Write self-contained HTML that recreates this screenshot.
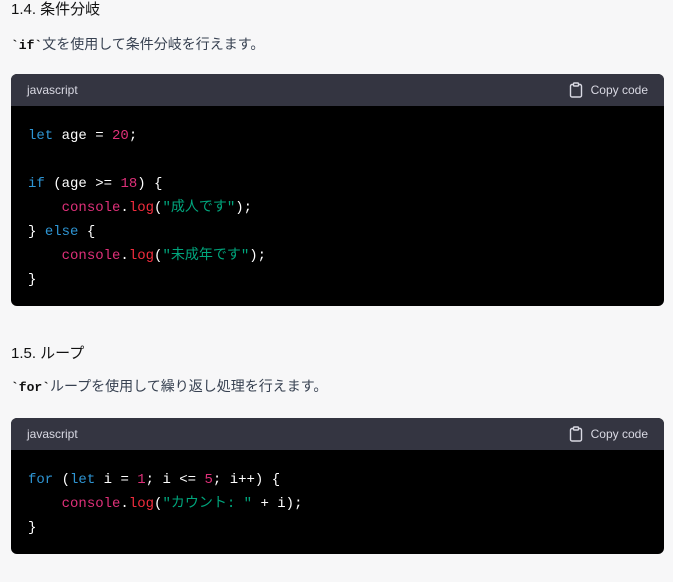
<!DOCTYPE html>
<html><head><meta charset="utf-8"><style>
body{margin:0;background:#f7f7f8;width:673px;height:582px;overflow:hidden;font-family:"Liberation Sans","Noto Sans CJK JP",sans-serif;color:#374151}
.h{position:absolute;left:11px;font-size:15px;color:#111}
.p{position:absolute;left:11px;font-size:14px;color:#374151}
.p code{font-family:"Liberation Mono",monospace;font-weight:bold;color:#111;font-size:13px}
.blk{position:absolute;left:11px;width:653px;background:#000;border-radius:6px;overflow:hidden}
.hd{height:32px;background:#343541;color:#d9d9e3;font-size:12px;display:flex;align-items:center;justify-content:space-between;padding:0 16px}
.cp{display:flex;align-items:center;gap:8px}
pre{margin:0;padding:18px 17px 0;font-family:"Liberation Mono","Noto Sans CJK JP",monospace;font-size:14px;line-height:24px;color:#fff}
.k{color:#2e95d3}.n{color:#df3079}.c{color:#df3079}.f{color:#f22c3d}.s{color:#00a67d}
</style></head><body>
<div class="h" style="top:-2px">1.4. 条件分岐</div>
<div class="p" style="top:34px"><code>`if`</code>文を使用して条件分岐を行えます。</div>
<div class="blk" style="top:74px;height:232px">
<div class="hd"><span>javascript</span><span class="cp"><svg width="14" height="16" viewBox="0 0 14 16" fill="none" stroke="#d9d9e3" stroke-width="1.4"><rect x="1.5" y="2.5" width="11" height="12.5" rx="1.5"/><rect x="4.5" y="1" width="5" height="3" rx="0.8" fill="#343541"/></svg>Copy code</span></div>
<pre><span class="k">let</span> age = <span class="n">20</span>;

<span class="k">if</span> (age &gt;= <span class="n">18</span>) {
    <span class="c">console</span>.<span class="f">log</span>(<span class="s">"成人です"</span>);
} <span class="k">else</span> {
    <span class="c">console</span>.<span class="f">log</span>(<span class="s">"未成年です"</span>);
}</pre></div>
<div class="h" style="top:342px">1.5. ループ</div>
<div class="p" style="top:376px"><code>`for`</code>ループを使用して繰り返し処理を行えます。</div>
<div class="blk" style="top:418px;height:136px">
<div class="hd"><span>javascript</span><span class="cp"><svg width="14" height="16" viewBox="0 0 14 16" fill="none" stroke="#d9d9e3" stroke-width="1.4"><rect x="1.5" y="2.5" width="11" height="12.5" rx="1.5"/><rect x="4.5" y="1" width="5" height="3" rx="0.8" fill="#343541"/></svg>Copy code</span></div>
<pre><span class="k">for</span> (<span class="k">let</span> i = <span class="n">1</span>; i &lt;= <span class="n">5</span>; i++) {
    <span class="c">console</span>.<span class="f">log</span>(<span class="s">"カウント: "</span> + i);
}</pre></div>
</body></html>
